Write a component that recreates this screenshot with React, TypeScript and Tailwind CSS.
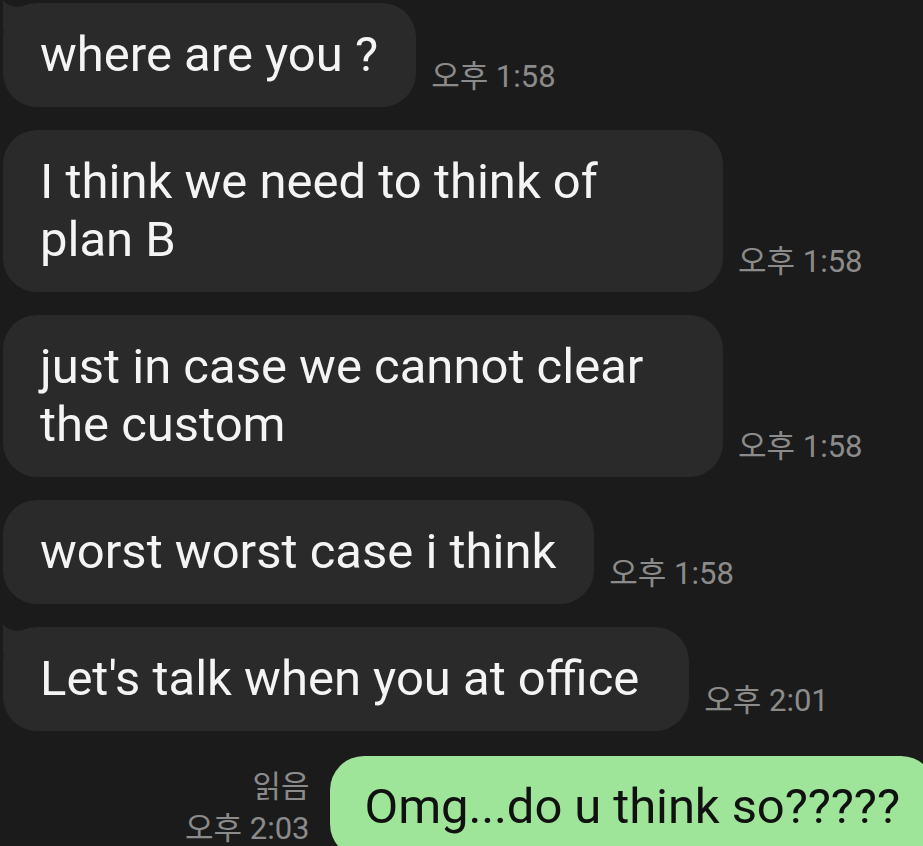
import React from "react";

const FONT = { fontFamily: 'Roboto, "Noto Sans CJK KR", sans-serif' };

function Tail() {
  return (
    <svg
      className="absolute left-0 top-[-3px]"
      width="30"
      height="30"
      viewBox="0 -3 30 30"
      fill="#2a2a2a"
    >
      <path d="M0 -3 Q 8 8 28 1 L28 30 L0 30 Z" />
    </svg>
  );
}

function Row({
  lines,
  time,
  tail,
  width,
  pr,
}: {
  lines: string[];
  time: string;
  tail?: boolean;
  width?: string;
  pr?: string;
}) {
  return (
    <div className="flex items-end">
      <div
        className={`relative rounded-[34px] bg-[#2a2a2a] pl-[37px] ${pr ?? "pr-[38px]"} py-[23px] text-[49px] leading-[58px] text-[#f4f4f4] whitespace-nowrap ${width ?? ""}`}
      >
        {tail && <Tail />}
        {lines.map((l, i) => (
          <div key={i} className="relative">
            {l}
          </div>
        ))}
      </div>
      <div className="ml-[15px] mb-[12px] text-[31px] leading-[36px] text-[#8b8b8b] whitespace-nowrap">
        {time}
      </div>
    </div>
  );
}

export default function App() {
  return (
    <div
      className="relative w-[923px] h-[846px] overflow-hidden bg-[#1b1b1b]"
      style={FONT}
    >
      <div className="flex flex-col gap-[23px] pl-[3px] pt-[3px]">
        <Row tail lines={["where are you ?"]} time="오후 1:58" />
        <Row
          lines={["I think we need to think of", "plan B"]}
          time="오후 1:58"
          width="w-[720px]"
        />
        <Row
          lines={["just in case we cannot clear", "the custom"]}
          time="오후 1:58"
          width="w-[720px]"
        />
        <Row lines={["worst worst case i think"]} time="오후 1:58" />
        <Row
          tail
          lines={["Let's talk when you at office"]}
          time="오후 2:01"
          pr="pr-[50px]"
        />
        <div className="flex items-start justify-end mt-[2px] mr-[-12px]">
          <div className="flex flex-col items-end mt-[10px] mr-[20px] text-[31px] leading-[42px] text-[#8b8b8b] whitespace-nowrap">
            <div>읽음</div>
            <div>오후 2:03</div>
          </div>
          <div className="rounded-[34px] bg-[#9ee599] pl-[35px] pr-[35px] py-[22px] text-[49px] leading-[58px] tracking-[-0.1px] text-[#111111] whitespace-nowrap">
            Omg...do u think so?????
          </div>
        </div>
      </div>
    </div>
  );
}
